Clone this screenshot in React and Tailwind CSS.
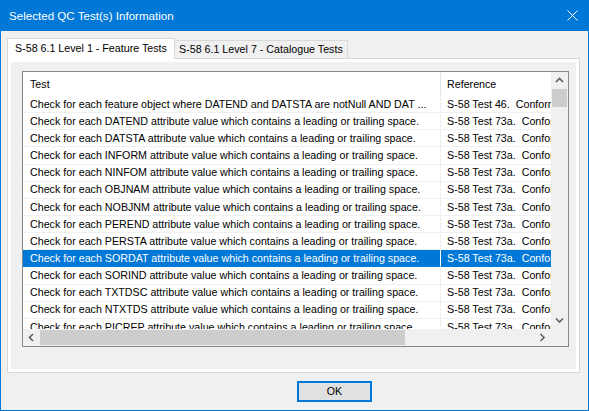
import React from 'react';

// Dialog: Selected QC Test(s) Information

const attrs = ['DATEND', 'DATSTA', 'INFORM', 'NINFOM', 'OBJNAM', 'NOBJNM', 'PEREND', 'PERSTA', 'SORDAT', 'SORIND', 'TXTDSC', 'NTXTDS', 'PICREP'];

const rows = [
  {
    test: 'Check for each feature object where DATEND and DATSTA are notNull AND DAT ...',
    ref: 'S-58 Test 46.  Conformance with the data model.',
  },
  ...attrs.map((a) => ({
    test: `Check for each ${a} attribute value which contains a leading or trailing space.`,
    ref: 'S-58 Test 73a.  Conformance with the data model.',
  })),
];

function Chevron({ dir }) {
  const pts = {
    up: '1,5 4.5,1.5 8,5',
    down: '1,1.5 4.5,5 8,1.5',
    left: '5,1 1.5,4.5 5,8',
    right: '1.5,1 5,4.5 1.5,8',
  }[dir];
  const vertical = dir === 'up' || dir === 'down';
  return (
    <svg width={vertical ? 9 : 7} height={vertical ? 7 : 9} viewBox={vertical ? '0 0 9 7' : '0 0 7 9'}>
      <polyline points={pts} fill="none" stroke="#606060" strokeWidth="1.6" />
    </svg>
  );
}

function Row({ row, selected }) {
  return (
    <div className={`flex h-[17.15px] shrink-0 leading-none ${selected ? 'bg-[#0078d7] text-white' : 'text-black'}`}>
      <div className={`w-[418px] shrink-0 flex items-center pl-[7px] overflow-hidden whitespace-pre border-b border-r ${selected ? 'border-r-white border-b-[#0078d7]' : 'border-[#f0f0f0]'}`}>
        {row.test}
      </div>
      <div className={`flex-1 flex items-center pl-[6px] overflow-hidden whitespace-pre border-b ${selected ? 'border-[#0078d7]' : 'border-[#f0f0f0]'}`}>
        {row.ref}
      </div>
    </div>
  );
}

export default function App() {
  return (
    <div className="w-[589px] h-[411px] bg-[#0078d7] flex flex-col px-px pb-px font-['Liberation_Sans',Arial,sans-serif] select-none">
      {/* Title bar */}
      <div className="h-[31px] shrink-0 flex items-center justify-between pl-[8px] pr-[10px] text-white text-[11.6px]">
        <span>Selected QC Test(s) Information</span>
        <svg width="11" height="11" viewBox="0 0 11 11">
          <path d="M0.5 0.5 L10.5 10.5 M10.5 0.5 L0.5 10.5" stroke="#ffffff" strokeWidth="1" />
        </svg>
      </div>

      {/* Body */}
      <div className="flex-1 bg-[#f0f0f0] flex flex-col px-[6px] text-[10.7px] text-black">
        {/* Tabs */}
        <div className="h-[27px] shrink-0 flex items-end">
          <div className="relative z-10 -mb-px h-[21px] w-[168px] bg-white border border-b-0 border-[#d9d9d9] flex items-center pl-[7px] pb-px">
            S-58 6.1 Level 1 - Feature Tests
          </div>
          <div className="h-[18px] w-[173px] bg-[#f0f0f0] border border-l-0 border-b-0 border-[#d9d9d9] flex items-center pl-[4px]">
            S-58 6.1 Level 7 - Catalogue Tests
          </div>
        </div>

        {/* Tab panel */}
        <div className="w-[573px] h-[315px] shrink-0 border border-[#d9d9d9] bg-white p-[3px]">
          <div className="h-full bg-[#f0f0f0] pt-[9px] pl-[11px]">
            {/* List view */}
            <div className="w-[547px] h-[276px] border border-[#828790] bg-white flex flex-col">
              <div className="flex-1 flex min-h-0">
                <div className="flex-1 flex flex-col min-w-0 overflow-hidden">
                  {/* Header */}
                  <div className="h-[24px] shrink-0 flex leading-none">
                    <div className="w-[418px] shrink-0 flex items-center pl-[7px] border-r border-[#e5e5e5]">Test</div>
                    <div className="flex-1 flex items-center pl-[6px]">Reference</div>
                  </div>
                  {/* Rows */}
                  <div className="flex-1 flex flex-col overflow-hidden">
                    {rows.map((r, i) => (
                      <Row key={i} row={r} selected={i === 9} />
                    ))}
                  </div>
                </div>
                {/* Vertical scrollbar */}
                <div className="w-[17px] shrink-0 bg-[#f0f0f0] flex flex-col">
                  <div className="h-[17px] flex items-center justify-center">
                    <Chevron dir="up" />
                  </div>
                  <div className="h-[18px] mx-px bg-[#cdcdcd]" />
                  <div className="flex-1" />
                  <div className="h-[17px] flex items-center justify-center">
                    <Chevron dir="down" />
                  </div>
                </div>
              </div>
              {/* Horizontal scrollbar */}
              <div className="h-[17px] shrink-0 flex bg-[#f0f0f0]">
                <div className="w-[17px] flex items-center justify-center">
                  <Chevron dir="left" />
                </div>
                <div className="w-[365px] my-px bg-[#cdcdcd]" />
                <div className="flex-1" />
                <div className="w-[17px] flex items-center justify-center">
                  <Chevron dir="right" />
                </div>
                <div className="w-[17px]" />
              </div>
            </div>
          </div>
        </div>

        {/* Buttons */}
        <div className="flex-1 flex items-start pt-[8px] pl-[290px]">
          <button className="w-[75px] h-[21px] border-2 border-[#0078d7] bg-[#e1e1e1] flex items-center justify-center leading-none">
            OK
          </button>
        </div>
      </div>
    </div>
  );
}
